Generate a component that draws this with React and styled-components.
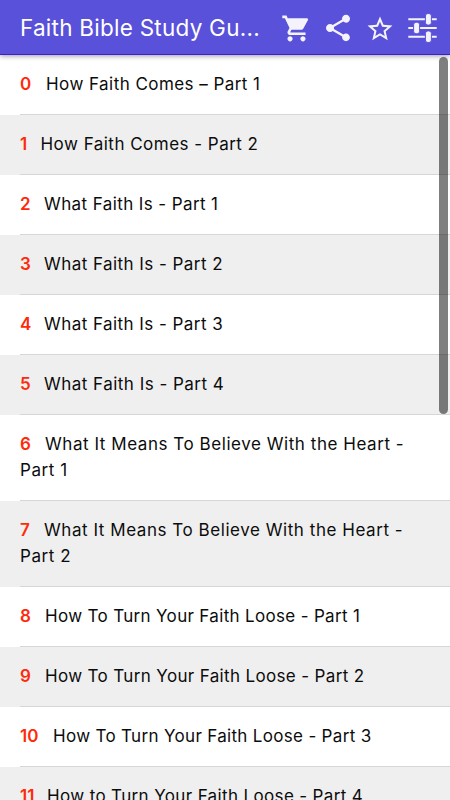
import styled, { createGlobalStyle } from "styled-components";
import { MdShare, MdShoppingCart, MdStarBorder } from "react-icons/md";

const GlobalStyle = createGlobalStyle`
  * {
    box-sizing: border-box;
  }

  body {
    margin: 0;
    overflow: hidden;
    font-family: Inter, "Liberation Sans", sans-serif;
  }
`;

const ScreenDiv = styled.div`
  display: flex;
  position: relative;
  flex-direction: column;
  width: 450px;
  height: 800px;
  overflow: hidden;
  background-color: #fff;
`;

const ToolbarHeader = styled.header`
  display: flex;
  flex-shrink: 0;
  position: relative;
  align-items: center;
  height: 55px;
  padding: 2px 0 0 20px;
  color: #f4f3fb;
  background-color: #5951d9;
  border-bottom: 1px solid #3a20d0;
  box-shadow: 0 1px 5px rgba(0, 0, 0, 0.4);
`;

const TitleH1 = styled.h1`
  width: 261px;
  margin: 0;
  color: #fff;
  font-size: 22.5px;
  font-weight: 400;
  letter-spacing: 0.25px;
  line-height: 52px;
  white-space: nowrap;
`;

const ActionButton = styled.button`
  display: flex;
  padding: ${({ $drop }) => $drop || 0}px 0 0;
  margin: 0 ${({ $gap }) => $gap}px 0 0;
  color: inherit;
  background: none;
  border: 0;
`;

const ListUl = styled.ul`
  padding: 0;
  margin: 0;
  list-style: none;
`;

const ListLi = styled.li`
  padding-left: 20px;
  background-color: #fff;

  &:nth-child(even) {
    background-color: #efefef;
  }
`;

const ContentDiv = styled.div`
  padding: 16px 20px 17px 0;
  color: #0c0c0c;
  font-size: 17px;
  line-height: 26px;
  letter-spacing: ${({ $tracking }) => $tracking}px;
  border-bottom: 1px solid #d6d6d6;
`;

const NumberSpan = styled.span`
  display: inline-block;
  width: ${({ $width }) => $width}px;
  color: #ff2a0a;
  font-weight: 600;
  letter-spacing: 0;
`;

const ScrollThumbDiv = styled.div`
  position: absolute;
  top: 57px;
  right: 2px;
  width: 9px;
  height: 357px;
  border-radius: 5px;
  background-color: rgba(0, 0, 0, 0.5);
`;

const lessons = [
  { title: "How Faith Comes – Part 1", indent: 26, tracking: 0.45 },
  { title: "How Faith Comes - Part 2", indent: 20.5, tracking: 0.48 },
  { title: "What Faith Is - Part 1", indent: 24, tracking: 0.4 },
  { title: "What Faith Is - Part 2", indent: 24, tracking: 0.45 },
  { title: "What Faith Is - Part 3", indent: 24, tracking: 0.45 },
  { title: "What Faith Is - Part 4", indent: 24, tracking: 0.48 },
  { title: "What It Means To Believe With the Heart - Part 1", indent: 25, tracking: 0.55 },
  { title: "What It Means To Believe With the Heart - Part 2", indent: 24, tracking: 0.55 },
  { title: "How To Turn Your Faith Loose - Part 1", indent: 25, tracking: 0.33 },
  { title: "How To Turn Your Faith Loose - Part 2", indent: 25, tracking: 0.35 },
  { title: "How To Turn Your Faith Loose - Part 3", indent: 33, tracking: 0.32 },
  { title: "How to Turn Your Faith Loose - Part 4", indent: 27, tracking: 0.36 },
];

function TuneIcon() {
  return (
    <svg width="30" height="30" viewBox="0 0 30 30" fill="currentColor">
      <path d="M1.3 5.3h28.4v2H1.3zM1.3 14h28.4v2H1.3zM1.3 22.7h28.4v2H1.3z" />
      <g stroke="#5951d9" strokeWidth="1">
        <rect x="18.4" y="0.5" width="6" height="11.6" rx="2.5" />
        <rect x="6.6" y="9.2" width="6" height="11.6" rx="2.5" />
        <rect x="18.4" y="17.9" width="6" height="11.6" rx="2.5" />
      </g>
    </svg>
  );
}

export default function App() {
  return (
    <>
      <GlobalStyle />
      <ScreenDiv>
        <ToolbarHeader>
          <TitleH1>Faith Bible Study Gu...</TitleH1>
          <ActionButton $gap={10}>
            <MdShoppingCart size={31} />
          </ActionButton>
          <ActionButton $gap={11}>
            <MdShare size={32} />
          </ActionButton>
          <ActionButton $gap={12} $drop={1}>
            <MdStarBorder size={30} />
          </ActionButton>
          <ActionButton $gap={0}>
            <TuneIcon />
          </ActionButton>
        </ToolbarHeader>
        <ListUl>
          {lessons.map(({ title, indent, tracking }, index) => (
            <ListLi key={title}>
              <ContentDiv $tracking={tracking}>
                <NumberSpan $width={indent}>{index}</NumberSpan>
                {title}
              </ContentDiv>
            </ListLi>
          ))}
        </ListUl>
        <ScrollThumbDiv />
      </ScreenDiv>
    </>
  );
}
